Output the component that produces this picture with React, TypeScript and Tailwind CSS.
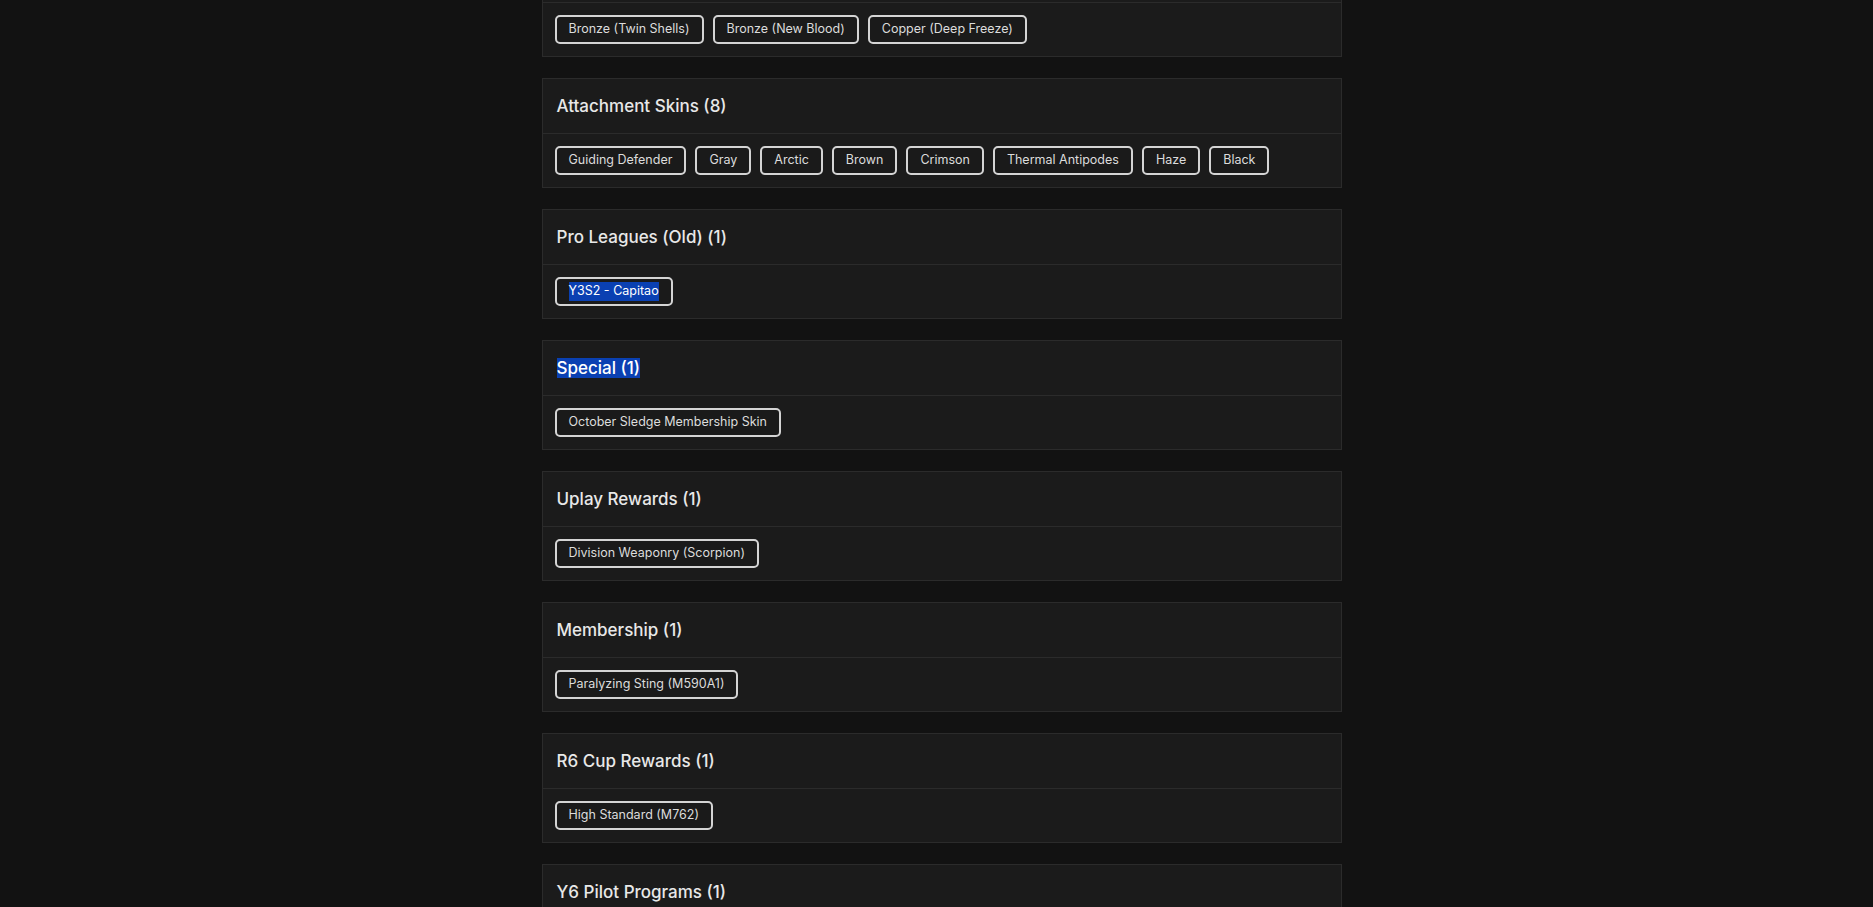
const sections: { title: string; items: string[]; selectTitle?: boolean; selectItems?: boolean }[] = [
  {
    title: "Bronze Skins (3)",
    items: ["Bronze (Twin Shells)", "Bronze (New Blood)", "Copper (Deep Freeze)"],
  },
  {
    title: "Attachment Skins (8)",
    items: [
      "Guiding Defender",
      "Gray",
      "Arctic",
      "Brown",
      "Crimson",
      "Thermal Antipodes",
      "Haze",
      "Black",
    ],
  },
  { title: "Pro Leagues (Old) (1)", items: ["Y3S2 - Capitao"], selectItems: true },
  { title: "Special (1)", items: ["October Sledge Membership Skin"], selectTitle: true },
  { title: "Uplay Rewards (1)", items: ["Division Weaponry (Scorpion)"] },
  { title: "Membership (1)", items: ["Paralyzing Sting (M590A1)"] },
  { title: "R6 Cup Rewards (1)", items: ["High Standard (M762)"] },
  { title: "Y6 Pilot Programs (1)", items: ["Pilot Program"] },
];

function Selected({ on, children }: { on?: boolean; children: React.ReactNode }) {
  if (!on) return <>{children}</>;
  return <span className="bg-[#0a40b2] text-white">{children}</span>;
}

export default function App() {
  return (
    <div
      className="h-[907px] overflow-hidden bg-[#121212] text-[#e4e4e4]"
      style={{ fontFamily: "Inter, 'Open Sans', sans-serif" }}
    >
      <div className="mx-auto w-[810px] pl-[10px]">
        <div className="mt-[-53px] flex flex-col gap-[21px]">
          {sections.map((section) => (
            <section
              key={section.title}
              className="border border-[#2b2b2b] bg-[#1b1b1b]"
            >
              <header className="flex h-[55px] items-center border-b border-[#2b2b2b] px-[14px]">
                <h2 className="text-[17px] font-medium leading-[22px] text-[#e8e8e8]">
                  <Selected on={section.selectTitle}>{section.title}</Selected>
                </h2>
              </header>
              <div className="flex flex-wrap gap-[9px] p-3">
                {section.items.map((item) => (
                  <span
                    key={item}
                    className="flex h-[29px] items-center rounded-[5px] border-2 border-[#d4d4d4] bg-[#1a1a1a] px-3 text-[12.5px] text-[#dcdcdc]"
                  >
                    <Selected on={section.selectItems}>{item}</Selected>
                  </span>
                ))}
              </div>
            </section>
          ))}
        </div>
      </div>
    </div>
  );
}
